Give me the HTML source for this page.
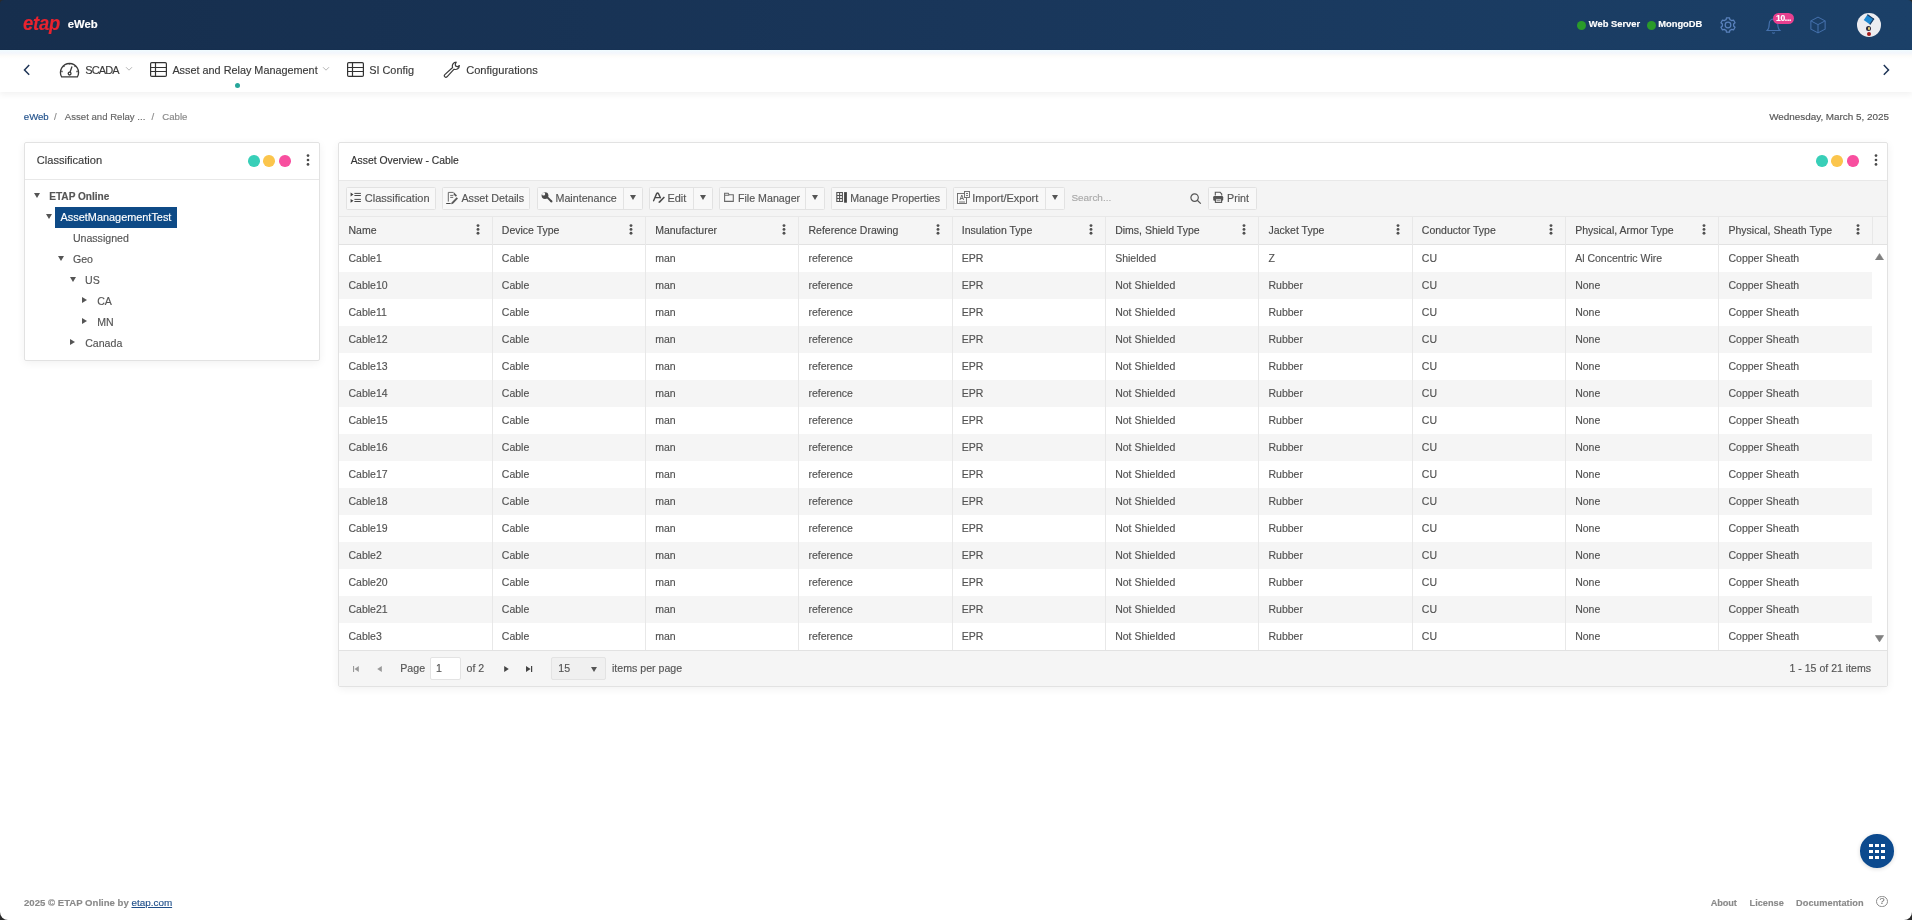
<!DOCTYPE html><html><head><meta charset="utf-8"><style>
*{box-sizing:border-box;margin:0;padding:0}
html,body{width:1912px;height:920px;overflow:hidden;background:#fff;font-family:"Liberation Sans",sans-serif;font-size:11px;color:#555}
#hdr{position:absolute;left:0;top:0;width:1912px;height:50px;background:linear-gradient(90deg,#162e4d 0%,#19365a 50%,#1b4068 100%)}
#nav{position:absolute;left:0;top:50px;width:1912px;height:42px;background:linear-gradient(#effbff 0,#f3f6fc 3px,#fdfcfa 6px,#fff 9px);box-shadow:0 3px 6px rgba(0,0,0,0.05)}
.t{position:absolute;white-space:nowrap;line-height:1;-webkit-text-stroke:0.15px currentColor}
.b{position:absolute}
.panel{position:absolute;background:#fff;border:1px solid #e2e2e2;border-radius:2px;box-shadow:0 2px 8px rgba(0,0,0,0.06)}
.dot{position:absolute;border-radius:50%}
.keb{position:absolute;width:3px;height:11px}
.keb i{position:absolute;left:0;width:2.8px;height:2.8px;border-radius:50%}
.btn{position:absolute;top:187px;height:22.5px;background:#f8f8f8;border:1px solid #e2e2e2;border-radius:1.5px}
.col{position:absolute;top:217px;height:433px;width:1px;background:#e8e8e8}
.row{position:absolute;left:339px;width:1533px;height:27px}
.tri{position:absolute;width:0;height:0}
</style></head><body><div id="root" style="position:absolute;left:0;top:0;width:1912px;height:920px;will-change:transform">
<div id="hdr"></div>
<div class="t" style="top:12.42px;font-size:21.00px;color:#e8232f;left:23.30px;font-weight:bold;font-style:italic;transform:scaleX(0.88);transform-origin:0 0;letter-spacing:-0.3px">etap</div>
<div class="t" style="top:19.03px;font-size:11.30px;color:#fff;left:67.80px;font-weight:bold;">eWeb</div>
<div class="dot" style="left:1577.10px;top:20.50px;width:9.40px;height:9.40px;background:#2a9b2a;"></div>
<div class="t" style="top:19.99px;font-size:9.35px;color:#fff;left:1588.80px;font-weight:bold;">Web Server</div>
<div class="dot" style="left:1646.50px;top:20.50px;width:9.40px;height:9.40px;background:#2a9b2a;"></div>
<div class="t" style="top:19.99px;font-size:9.35px;color:#fff;left:1658.20px;font-weight:bold;">MongoDB</div>
<svg style="position:absolute;left:1719.3px;top:15.6px;" width="18" height="18" viewBox="0 0 18 18"><g fill="none" stroke="#5a82bd" stroke-width="1.25" stroke-linejoin="round"><path d="M6.15 4.06 L7.14 3.61 L7.46 1.76 L10.54 1.76 L10.86 3.61 L11.85 4.06 L12.74 4.70 L14.50 4.05 L16.04 6.71 L14.60 7.91 L14.70 9.00 L14.60 10.09 L16.04 11.29 L14.50 13.95 L12.74 13.30 L11.85 13.94 L10.86 14.39 L10.54 16.24 L7.46 16.24 L7.14 14.39 L6.15 13.94 L5.26 13.30 L3.50 13.95 L1.96 11.29 L3.40 10.09 L3.30 9.00 L3.40 7.91 L1.96 6.71 L3.50 4.05 L5.26 4.70z"/><circle cx="9" cy="9" r="2.8"/></g></svg>
<svg style="position:absolute;left:1765px;top:17px;" width="17" height="17" viewBox="0 0 24 24"><g fill="none" stroke="#4571ad" stroke-width="1.6"><path d="M18 9A6 6 0 0 0 6 9c0 7-3 10-3 10h18s-3-3-3-10"/><path d="M13.73 22a2 2 0 0 1-3.46 0"/></g></svg>
<div class="t" style="left:1772.8px;top:13.4px;width:21.5px;height:10.5px;border-radius:5.5px;background:#e8408f;color:#fff;font-size:8.5px;font-weight:bold;line-height:10.5px;text-align:center;letter-spacing:-0.3px">10...</div>
<svg style="position:absolute;left:1809px;top:16px;" width="18" height="18" viewBox="0 0 24 24"><g fill="none" stroke="#4571ad" stroke-width="1.4" stroke-linejoin="round"><path d="M12 1.5 21.5 6.5v11L12 22.5 2.5 17.5v-11z"/><path d="M2.5 6.5 12 11.5 21.5 6.5M12 11.5v11"/></g></svg>
<div class="dot" style="left:1857.10px;top:12.90px;width:23.80px;height:23.80px;background:#ececf0;"></div>
<div class="b" style="left:1864.6px;top:16.3px;width:8px;height:7px;background:#1e88d0;border-top:1px solid #24385a;border-right:1px solid #24385a;transform:rotate(35deg)"></div>
<div class="dot" style="left:1865.70px;top:26.30px;width:5.20px;height:5.20px;background:#2e2a3e;"></div>
<div class="dot" style="left:1867.60px;top:27.00px;width:2.60px;height:2.60px;background:#e6cf74;"></div>
<div class="dot" style="left:1867.30px;top:31.80px;width:4.20px;height:4.20px;background:#a51a1a;"></div>
<div id="nav"></div>
<svg style="position:absolute;left:21.5px;top:64px;" width="10" height="12" viewBox="0 0 10 12"><path d="M7.2 1 2.5 5.9l4.7 4.8" fill="none" stroke="#1f3557" stroke-width="1.5"/></svg>
<svg style="position:absolute;left:59px;top:61px;" width="21" height="17" viewBox="0 0 21 17"><g fill="none" stroke="#3b3b3b" stroke-width="1.3"><path d="M2.6 15.8h15.8a9 9 0 1 0-15.8 0z"/><path d="M13 5.5 11 11.3"/><circle cx="10.6" cy="12.6" r="1.4"/><path d="M10.5 2.2v1.3M4.5 5l.9.9M16.5 5l-.9.9M2.3 10.5h1.3M18.7 10.5h-1.3"/></g></svg>
<div class="t" style="top:65.19px;font-size:11.00px;color:#3a3a3a;left:85.20px;letter-spacing:-0.85px">SCADA</div>
<svg style="position:absolute;left:125px;top:66px;" width="8" height="6" viewBox="0 0 8 6"><path d="M1 1.2 4 4.2 7 1.2" fill="none" stroke="#b5b5b5" stroke-width="1"/></svg>
<svg style="position:absolute;left:150px;top:62px;" width="17" height="15" viewBox="0 0 17 15"><g fill="none" stroke="#333" stroke-width="1.2"><rect x=".6" y=".6" width="15.8" height="13.8" rx="1.2"/><path d="M.6 5.5h15.8M.6 9.5h15.8M5.5.6v13.8"/></g></svg>
<div class="t" style="top:65.32px;font-size:10.85px;color:#3a3a3a;left:172.40px;">Asset and Relay Management</div>
<svg style="position:absolute;left:322px;top:66px;" width="8" height="6" viewBox="0 0 8 6"><path d="M1 1.2 4 4.2 7 1.2" fill="none" stroke="#b5b5b5" stroke-width="1"/></svg>
<div class="dot" style="left:235.05px;top:83.15px;width:5.30px;height:5.30px;background:#26a69a;"></div>
<svg style="position:absolute;left:347px;top:62px;" width="17" height="15" viewBox="0 0 17 15"><g fill="none" stroke="#333" stroke-width="1.2"><rect x=".6" y=".6" width="15.8" height="13.8" rx="1.2"/><path d="M.6 5.5h15.8M.6 9.5h15.8M5.5.6v13.8"/></g></svg>
<div class="t" style="top:65.27px;font-size:10.90px;color:#3a3a3a;left:369.20px;">SI Config</div>
<svg style="position:absolute;left:443px;top:61px;" width="18" height="17" viewBox="0 0 18 17"><path d="M13.2 1.2a3.9 3.9 0 0 0-3.6 5.3L1.8 13.6a1.5 1.5 0 0 0 0 2.1l.1.1a1.5 1.5 0 0 0 2.1 0l7.1-7.6a3.9 3.9 0 0 0 5.3-3.6l-2 1.2-1.9-.9-.2-2z" fill="none" stroke="#3b3b3b" stroke-width="1.2" stroke-linejoin="round"/></svg>
<div class="t" style="top:65.10px;font-size:11.10px;color:#3a3a3a;left:466.20px;">Configurations</div>
<svg style="position:absolute;left:1880.5px;top:64px;" width="10" height="12" viewBox="0 0 10 12"><path d="M2.8 1 7.5 5.9l-4.7 4.8" fill="none" stroke="#1f3557" stroke-width="1.5"/></svg>
<div class="t" style="top:111.87px;font-size:9.60px;color:#1f4f8a;left:23.80px;">eWeb</div>
<div class="t" style="top:111.87px;font-size:9.60px;color:#888;left:54.00px;">/</div>
<div class="t" style="top:111.87px;font-size:9.60px;color:#666;left:64.80px;">Asset and Relay ...</div>
<div class="t" style="top:111.87px;font-size:9.60px;color:#888;left:151.50px;">/</div>
<div class="t" style="top:111.87px;font-size:9.60px;color:#888;left:162.30px;">Cable</div>
<div class="t" style="top:111.62px;font-size:9.90px;color:#555;right:23.00px;">Wednesday, March 5, 2025</div>
<div class="panel" style="left:24px;top:142px;width:296px;height:219px"></div>
<div class="b" style="left:25px;top:179px;width:294px;height:1px;background:#e8e8e8;"></div>
<div class="t" style="top:154.90px;font-size:11.10px;color:#3a3a3a;left:36.80px;">Classification</div>
<div class="dot" style="left:248.10px;top:155.10px;width:11.60px;height:11.60px;background:#38cfb8;"></div>
<div class="dot" style="left:263.30px;top:155.10px;width:11.60px;height:11.60px;background:#fbc54c;"></div>
<div class="dot" style="left:279.20px;top:155.10px;width:11.60px;height:11.60px;background:#f84f9f;"></div>
<svg style="position:absolute;left:304.70px;top:152.90px" width="6" height="14" viewBox="0 0 6 14"><g fill="#4a4a4a"><circle cx="3" cy="2.6" r="1.35"/><circle cx="3" cy="7" r="1.35"/><circle cx="3" cy="11.4" r="1.35"/></g></svg>
<div class="tri" style="left:33.70px;top:193.30px;border-left:3.50px solid transparent;border-right:3.50px solid transparent;border-top:5.00px solid #555"></div>
<div class="t" style="top:191.55px;font-size:10.10px;color:#555;left:49.20px;font-weight:bold;">ETAP Online</div>
<div class="b" style="left:55px;top:207px;width:122px;height:21px;background:#0e4a86;"></div>
<div class="tri" style="left:46.00px;top:213.70px;border-left:3.50px solid transparent;border-right:3.50px solid transparent;border-top:5.00px solid #555"></div>
<div class="t" style="top:212.27px;font-size:10.90px;color:#fff;left:60.60px;">AssetManagementTest</div>
<div class="t" style="top:233.23px;font-size:10.60px;color:#555;left:72.90px;">Unassigned</div>
<div class="tri" style="left:57.80px;top:256.00px;border-left:3.50px solid transparent;border-right:3.50px solid transparent;border-top:5.00px solid #555"></div>
<div class="t" style="top:254.03px;font-size:10.60px;color:#555;left:72.90px;">Geo</div>
<div class="tri" style="left:69.80px;top:276.80px;border-left:3.50px solid transparent;border-right:3.50px solid transparent;border-top:5.00px solid #555"></div>
<div class="t" style="top:275.03px;font-size:10.60px;color:#555;left:85.00px;">US</div>
<div class="tri" style="left:82.40px;top:297.00px;border-top:3.50px solid transparent;border-bottom:3.50px solid transparent;border-left:5.00px solid #555"></div>
<div class="t" style="top:296.03px;font-size:10.60px;color:#555;left:97.20px;">CA</div>
<div class="tri" style="left:82.40px;top:318.20px;border-top:3.50px solid transparent;border-bottom:3.50px solid transparent;border-left:5.00px solid #555"></div>
<div class="t" style="top:317.03px;font-size:10.60px;color:#555;left:97.20px;">MN</div>
<div class="tri" style="left:70.40px;top:338.70px;border-top:3.50px solid transparent;border-bottom:3.50px solid transparent;border-left:5.00px solid #555"></div>
<div class="t" style="top:338.03px;font-size:10.60px;color:#555;left:85.20px;">Canada</div>
<div class="panel" style="left:338px;top:142px;width:1550px;height:545px"></div>
<div class="t" style="top:155.64px;font-size:10.35px;color:#333;left:350.70px;">Asset Overview - Cable</div>
<div class="dot" style="left:1816.20px;top:155.10px;width:11.60px;height:11.60px;background:#38cfb8;"></div>
<div class="dot" style="left:1831.20px;top:155.10px;width:11.60px;height:11.60px;background:#fbc54c;"></div>
<div class="dot" style="left:1847.20px;top:155.10px;width:11.60px;height:11.60px;background:#f84f9f;"></div>
<svg style="position:absolute;left:1873.20px;top:152.90px" width="6" height="14" viewBox="0 0 6 14"><g fill="#4a4a4a"><circle cx="3" cy="2.6" r="1.35"/><circle cx="3" cy="7" r="1.35"/><circle cx="3" cy="11.4" r="1.35"/></g></svg>
<div class="b" style="left:339px;top:180px;width:1548px;height:36px;background:#f4f4f4;border-top:1px solid #e8e8e8"></div>
<div class="btn" style="left:346px;width:90px"></div>
<div class="t" style="top:192.59px;font-size:11.00px;color:#555;left:364.80px;">Classification</div>
<div class="btn" style="left:442px;width:88px"></div>
<div class="t" style="top:192.80px;font-size:10.75px;color:#555;left:461.40px;">Asset Details</div>
<div class="btn" style="left:537px;width:106px"></div>
<div class="b" style="left:623px;top:188px;width:1px;height:21px;background:#e3e3e3;"></div>
<div class="tri" style="left:630.00px;top:195.20px;border-left:3.50px solid transparent;border-right:3.50px solid transparent;border-top:5.00px solid #555"></div>
<div class="t" style="top:192.84px;font-size:10.70px;color:#555;left:555.50px;">Maintenance</div>
<div class="btn" style="left:649px;width:64px"></div>
<div class="b" style="left:693px;top:188px;width:1px;height:21px;background:#e3e3e3;"></div>
<div class="tri" style="left:700.00px;top:195.20px;border-left:3.50px solid transparent;border-right:3.50px solid transparent;border-top:5.00px solid #555"></div>
<div class="t" style="top:192.67px;font-size:10.90px;color:#555;left:667.50px;">Edit</div>
<div class="btn" style="left:719px;width:106px"></div>
<div class="b" style="left:805px;top:188px;width:1px;height:21px;background:#e3e3e3;"></div>
<div class="tri" style="left:812.00px;top:195.20px;border-left:3.50px solid transparent;border-right:3.50px solid transparent;border-top:5.00px solid #555"></div>
<div class="t" style="top:192.88px;font-size:10.65px;color:#555;left:738.00px;">File Manager</div>
<div class="btn" style="left:831px;width:116px"></div>
<div class="t" style="top:192.88px;font-size:10.65px;color:#555;left:850.20px;">Manage Properties</div>
<div class="btn" style="left:953px;width:112px"></div>
<div class="b" style="left:1045px;top:188px;width:1px;height:21px;background:#e3e3e3;"></div>
<div class="tri" style="left:1052.00px;top:195.20px;border-left:3.50px solid transparent;border-right:3.50px solid transparent;border-top:5.00px solid #555"></div>
<div class="t" style="top:192.59px;font-size:11.00px;color:#555;left:972.30px;">Import/Export</div>
<div class="t" style="top:193.48px;font-size:9.95px;color:#aaa;left:1071.40px;">Search...</div>
<svg style="position:absolute;left:1190px;top:193px;" width="12" height="11" viewBox="0 0 12 11"><g fill="none" stroke="#555" stroke-width="1.2"><circle cx="4.6" cy="4.6" r="3.7"/><path d="M7.3 7.3 10.8 10.6"/></g></svg>
<div class="btn" style="left:1208px;width:49px"></div>
<div class="t" style="top:192.84px;font-size:10.70px;color:#555;left:1227.00px;">Print</div>
<svg style="position:absolute;left:347px;top:188px;" width="16" height="18" viewBox="0 0 16 18"><g fill="#444"><path d="M3.6 4.6v3.8l2.9-1.9z M3.6 10.9v3.9l2.9-1.95z"/></g><g stroke="#4a4a4a" stroke-width="1"><path d="M7.4 5.4h6.5M7.4 7.5h6.5M7.4 11.4h6.5M7.4 13.5h6.5"/></g></svg>
<svg style="position:absolute;left:443px;top:188px;" width="16" height="18" viewBox="0 0 16 18"><g fill="none" stroke="#6a6a6a" stroke-width="1"><path d="M5.3 13.6V4.4h5.2"/><path d="M7.2 7.4h3.2M7.2 9.4h3"/></g><path d="M10.8 4.2l3.2 3.3-1.2 1.2-2.2-2.2z" fill="#555"/><path d="M13.6 9.2l1.4 1.4-5 5.2-1.9.5.5-1.9z" fill="#5a5a5a"/><path d="M3.2 15.5h4.5" stroke="#444" stroke-width="1"/></svg>
<svg style="position:absolute;left:538px;top:188px;" width="16" height="17" viewBox="0 0 16 17"><g fill="#4a4a4a"><circle cx="7" cy="7.6" r="3.4"/><path d="M8.2 9.6 9.6 8.2 14.2 12.8 12.8 14.2z"/><circle cx="13.5" cy="13.5" r="1"/></g><circle cx="5.6" cy="5.9" r="1.6" fill="#f8f8f8"/></svg>
<svg style="position:absolute;left:650px;top:188px;" width="16" height="17" viewBox="0 0 16 17"><g fill="none" stroke="#4a4a4a" stroke-width="1.4" stroke-linecap="round"><path d="M3.6 12.8 6.5 5.9Q7.5 4 8.6 5.9L10.4 9.8M5.2 9.6H9.6"/></g><path d="M13.8 8.4l1.1 1.1-4.9 5.2-1.5.3.3-1.5z" fill="#4a4a4a"/></svg>
<svg style="position:absolute;left:720px;top:188px;" width="16" height="16" viewBox="0 0 16 16"><path d="M4.6 5.2h3.6l.9 1.6h4.2v6.6H4.6z M4.6 7.2h4.6" fill="none" stroke="#6a6a6a" stroke-width="1.1"/></svg>
<svg style="position:absolute;left:833px;top:188px;" width="16" height="16" viewBox="0 0 16 16"><g fill="none" stroke="#555" stroke-width="1.1"><path d="M3.8 4.5h5.6v9H3.8z M6.6 4.5v9 M3.8 7.5h5.6 M3.8 10.5h5.6"/></g><rect x="11.1" y="4.1" width="2.8" height="10.6" fill="#444"/></svg>
<svg style="position:absolute;left:957px;top:191px;" width="13" height="13" viewBox="0 0 13 13"><g fill="none" stroke="#666" stroke-width="0.9"><rect x=".5" y="2.5" width="9" height="10"/><path d="M3 9l1.8-5 1.8 5M3.6 7.5h2.4M2 11h6"/><rect x="7.5" y=".5" width="5" height="6" fill="#f8f8f8"/><path d="M9 2.5h2M9 4.5h2"/></g></svg>
<svg style="position:absolute;left:1208px;top:186px;" width="20" height="20" viewBox="0 0 20 20"><path d="M7.3 9.5V6.3h4.8l1.6 1.6v1.6" fill="none" stroke="#555" stroke-width="1.1"/><rect x="5.2" y="10" width="10" height="4.8" rx="1.2" fill="#555"/><rect x="7.4" y="12.8" width="6.2" height="3.6" fill="#f8f8f8" stroke="#555" stroke-width="1.1"/><path d="M8.5 14.6h4" stroke="#777" stroke-width="0.8"/></svg>
<div class="b" style="left:339px;top:216px;width:1548px;height:29px;background:#f5f5f5;border-top:1px solid #e8e8e8;border-bottom:1px solid #e2e2e2"></div>
<div class="t" style="top:225.01px;font-size:10.50px;color:#484848;left:348.50px;">Name</div>
<svg style="position:absolute;left:475.00px;top:224.20px" width="6" height="12" viewBox="0 0 6 12"><g fill="#505050"><circle cx="3" cy="1.6" r="1.45"/><circle cx="3" cy="5.4" r="1.45"/><circle cx="3" cy="9.2" r="1.45"/></g></svg>
<div class="t" style="top:225.01px;font-size:10.50px;color:#484848;left:501.83px;">Device Type</div>
<svg style="position:absolute;left:628.00px;top:224.20px" width="6" height="12" viewBox="0 0 6 12"><g fill="#505050"><circle cx="3" cy="1.6" r="1.45"/><circle cx="3" cy="5.4" r="1.45"/><circle cx="3" cy="9.2" r="1.45"/></g></svg>
<div class="t" style="top:225.01px;font-size:10.50px;color:#484848;left:655.17px;">Manufacturer</div>
<svg style="position:absolute;left:781.00px;top:224.20px" width="6" height="12" viewBox="0 0 6 12"><g fill="#505050"><circle cx="3" cy="1.6" r="1.45"/><circle cx="3" cy="5.4" r="1.45"/><circle cx="3" cy="9.2" r="1.45"/></g></svg>
<div class="t" style="top:225.01px;font-size:10.50px;color:#484848;left:808.50px;">Reference Drawing</div>
<svg style="position:absolute;left:935.00px;top:224.20px" width="6" height="12" viewBox="0 0 6 12"><g fill="#505050"><circle cx="3" cy="1.6" r="1.45"/><circle cx="3" cy="5.4" r="1.45"/><circle cx="3" cy="9.2" r="1.45"/></g></svg>
<div class="t" style="top:225.01px;font-size:10.50px;color:#484848;left:961.83px;">Insulation Type</div>
<svg style="position:absolute;left:1088.00px;top:224.20px" width="6" height="12" viewBox="0 0 6 12"><g fill="#505050"><circle cx="3" cy="1.6" r="1.45"/><circle cx="3" cy="5.4" r="1.45"/><circle cx="3" cy="9.2" r="1.45"/></g></svg>
<div class="t" style="top:225.01px;font-size:10.50px;color:#484848;left:1115.17px;">Dims, Shield Type</div>
<svg style="position:absolute;left:1241.00px;top:224.20px" width="6" height="12" viewBox="0 0 6 12"><g fill="#505050"><circle cx="3" cy="1.6" r="1.45"/><circle cx="3" cy="5.4" r="1.45"/><circle cx="3" cy="9.2" r="1.45"/></g></svg>
<div class="t" style="top:225.01px;font-size:10.50px;color:#484848;left:1268.50px;">Jacket Type</div>
<svg style="position:absolute;left:1395.00px;top:224.20px" width="6" height="12" viewBox="0 0 6 12"><g fill="#505050"><circle cx="3" cy="1.6" r="1.45"/><circle cx="3" cy="5.4" r="1.45"/><circle cx="3" cy="9.2" r="1.45"/></g></svg>
<div class="t" style="top:225.01px;font-size:10.50px;color:#484848;left:1421.83px;">Conductor Type</div>
<svg style="position:absolute;left:1548.00px;top:224.20px" width="6" height="12" viewBox="0 0 6 12"><g fill="#505050"><circle cx="3" cy="1.6" r="1.45"/><circle cx="3" cy="5.4" r="1.45"/><circle cx="3" cy="9.2" r="1.45"/></g></svg>
<div class="t" style="top:225.01px;font-size:10.50px;color:#484848;left:1575.17px;">Physical, Armor Type</div>
<svg style="position:absolute;left:1701.00px;top:224.20px" width="6" height="12" viewBox="0 0 6 12"><g fill="#505050"><circle cx="3" cy="1.6" r="1.45"/><circle cx="3" cy="5.4" r="1.45"/><circle cx="3" cy="9.2" r="1.45"/></g></svg>
<div class="t" style="top:225.01px;font-size:10.50px;color:#484848;left:1728.50px;">Physical, Sheath Type</div>
<svg style="position:absolute;left:1855.00px;top:224.20px" width="6" height="12" viewBox="0 0 6 12"><g fill="#505050"><circle cx="3" cy="1.6" r="1.45"/><circle cx="3" cy="5.4" r="1.45"/><circle cx="3" cy="9.2" r="1.45"/></g></svg>
<div class="t" style="top:253.31px;font-size:10.50px;color:#525252;left:348.50px;">Cable1</div>
<div class="t" style="top:253.31px;font-size:10.50px;color:#525252;left:501.83px;">Cable</div>
<div class="t" style="top:253.31px;font-size:10.50px;color:#525252;left:655.17px;">man</div>
<div class="t" style="top:253.31px;font-size:10.50px;color:#525252;left:808.50px;">reference</div>
<div class="t" style="top:253.31px;font-size:10.50px;color:#525252;left:961.83px;">EPR</div>
<div class="t" style="top:253.31px;font-size:10.50px;color:#525252;left:1115.17px;">Shielded</div>
<div class="t" style="top:253.31px;font-size:10.50px;color:#525252;left:1268.50px;">Z</div>
<div class="t" style="top:253.31px;font-size:10.50px;color:#525252;left:1421.83px;">CU</div>
<div class="t" style="top:253.31px;font-size:10.50px;color:#525252;left:1575.17px;">Al Concentric Wire</div>
<div class="t" style="top:253.31px;font-size:10.50px;color:#525252;left:1728.50px;">Copper Sheath</div>
<div class="row" style="top:272px;background:#f5f5f5"></div>
<div class="t" style="top:280.31px;font-size:10.50px;color:#525252;left:348.50px;">Cable10</div>
<div class="t" style="top:280.31px;font-size:10.50px;color:#525252;left:501.83px;">Cable</div>
<div class="t" style="top:280.31px;font-size:10.50px;color:#525252;left:655.17px;">man</div>
<div class="t" style="top:280.31px;font-size:10.50px;color:#525252;left:808.50px;">reference</div>
<div class="t" style="top:280.31px;font-size:10.50px;color:#525252;left:961.83px;">EPR</div>
<div class="t" style="top:280.31px;font-size:10.50px;color:#525252;left:1115.17px;">Not Shielded</div>
<div class="t" style="top:280.31px;font-size:10.50px;color:#525252;left:1268.50px;">Rubber</div>
<div class="t" style="top:280.31px;font-size:10.50px;color:#525252;left:1421.83px;">CU</div>
<div class="t" style="top:280.31px;font-size:10.50px;color:#525252;left:1575.17px;">None</div>
<div class="t" style="top:280.31px;font-size:10.50px;color:#525252;left:1728.50px;">Copper Sheath</div>
<div class="t" style="top:307.31px;font-size:10.50px;color:#525252;left:348.50px;">Cable11</div>
<div class="t" style="top:307.31px;font-size:10.50px;color:#525252;left:501.83px;">Cable</div>
<div class="t" style="top:307.31px;font-size:10.50px;color:#525252;left:655.17px;">man</div>
<div class="t" style="top:307.31px;font-size:10.50px;color:#525252;left:808.50px;">reference</div>
<div class="t" style="top:307.31px;font-size:10.50px;color:#525252;left:961.83px;">EPR</div>
<div class="t" style="top:307.31px;font-size:10.50px;color:#525252;left:1115.17px;">Not Shielded</div>
<div class="t" style="top:307.31px;font-size:10.50px;color:#525252;left:1268.50px;">Rubber</div>
<div class="t" style="top:307.31px;font-size:10.50px;color:#525252;left:1421.83px;">CU</div>
<div class="t" style="top:307.31px;font-size:10.50px;color:#525252;left:1575.17px;">None</div>
<div class="t" style="top:307.31px;font-size:10.50px;color:#525252;left:1728.50px;">Copper Sheath</div>
<div class="row" style="top:326px;background:#f5f5f5"></div>
<div class="t" style="top:334.31px;font-size:10.50px;color:#525252;left:348.50px;">Cable12</div>
<div class="t" style="top:334.31px;font-size:10.50px;color:#525252;left:501.83px;">Cable</div>
<div class="t" style="top:334.31px;font-size:10.50px;color:#525252;left:655.17px;">man</div>
<div class="t" style="top:334.31px;font-size:10.50px;color:#525252;left:808.50px;">reference</div>
<div class="t" style="top:334.31px;font-size:10.50px;color:#525252;left:961.83px;">EPR</div>
<div class="t" style="top:334.31px;font-size:10.50px;color:#525252;left:1115.17px;">Not Shielded</div>
<div class="t" style="top:334.31px;font-size:10.50px;color:#525252;left:1268.50px;">Rubber</div>
<div class="t" style="top:334.31px;font-size:10.50px;color:#525252;left:1421.83px;">CU</div>
<div class="t" style="top:334.31px;font-size:10.50px;color:#525252;left:1575.17px;">None</div>
<div class="t" style="top:334.31px;font-size:10.50px;color:#525252;left:1728.50px;">Copper Sheath</div>
<div class="t" style="top:361.31px;font-size:10.50px;color:#525252;left:348.50px;">Cable13</div>
<div class="t" style="top:361.31px;font-size:10.50px;color:#525252;left:501.83px;">Cable</div>
<div class="t" style="top:361.31px;font-size:10.50px;color:#525252;left:655.17px;">man</div>
<div class="t" style="top:361.31px;font-size:10.50px;color:#525252;left:808.50px;">reference</div>
<div class="t" style="top:361.31px;font-size:10.50px;color:#525252;left:961.83px;">EPR</div>
<div class="t" style="top:361.31px;font-size:10.50px;color:#525252;left:1115.17px;">Not Shielded</div>
<div class="t" style="top:361.31px;font-size:10.50px;color:#525252;left:1268.50px;">Rubber</div>
<div class="t" style="top:361.31px;font-size:10.50px;color:#525252;left:1421.83px;">CU</div>
<div class="t" style="top:361.31px;font-size:10.50px;color:#525252;left:1575.17px;">None</div>
<div class="t" style="top:361.31px;font-size:10.50px;color:#525252;left:1728.50px;">Copper Sheath</div>
<div class="row" style="top:380px;background:#f5f5f5"></div>
<div class="t" style="top:388.31px;font-size:10.50px;color:#525252;left:348.50px;">Cable14</div>
<div class="t" style="top:388.31px;font-size:10.50px;color:#525252;left:501.83px;">Cable</div>
<div class="t" style="top:388.31px;font-size:10.50px;color:#525252;left:655.17px;">man</div>
<div class="t" style="top:388.31px;font-size:10.50px;color:#525252;left:808.50px;">reference</div>
<div class="t" style="top:388.31px;font-size:10.50px;color:#525252;left:961.83px;">EPR</div>
<div class="t" style="top:388.31px;font-size:10.50px;color:#525252;left:1115.17px;">Not Shielded</div>
<div class="t" style="top:388.31px;font-size:10.50px;color:#525252;left:1268.50px;">Rubber</div>
<div class="t" style="top:388.31px;font-size:10.50px;color:#525252;left:1421.83px;">CU</div>
<div class="t" style="top:388.31px;font-size:10.50px;color:#525252;left:1575.17px;">None</div>
<div class="t" style="top:388.31px;font-size:10.50px;color:#525252;left:1728.50px;">Copper Sheath</div>
<div class="t" style="top:415.31px;font-size:10.50px;color:#525252;left:348.50px;">Cable15</div>
<div class="t" style="top:415.31px;font-size:10.50px;color:#525252;left:501.83px;">Cable</div>
<div class="t" style="top:415.31px;font-size:10.50px;color:#525252;left:655.17px;">man</div>
<div class="t" style="top:415.31px;font-size:10.50px;color:#525252;left:808.50px;">reference</div>
<div class="t" style="top:415.31px;font-size:10.50px;color:#525252;left:961.83px;">EPR</div>
<div class="t" style="top:415.31px;font-size:10.50px;color:#525252;left:1115.17px;">Not Shielded</div>
<div class="t" style="top:415.31px;font-size:10.50px;color:#525252;left:1268.50px;">Rubber</div>
<div class="t" style="top:415.31px;font-size:10.50px;color:#525252;left:1421.83px;">CU</div>
<div class="t" style="top:415.31px;font-size:10.50px;color:#525252;left:1575.17px;">None</div>
<div class="t" style="top:415.31px;font-size:10.50px;color:#525252;left:1728.50px;">Copper Sheath</div>
<div class="row" style="top:434px;background:#f5f5f5"></div>
<div class="t" style="top:442.31px;font-size:10.50px;color:#525252;left:348.50px;">Cable16</div>
<div class="t" style="top:442.31px;font-size:10.50px;color:#525252;left:501.83px;">Cable</div>
<div class="t" style="top:442.31px;font-size:10.50px;color:#525252;left:655.17px;">man</div>
<div class="t" style="top:442.31px;font-size:10.50px;color:#525252;left:808.50px;">reference</div>
<div class="t" style="top:442.31px;font-size:10.50px;color:#525252;left:961.83px;">EPR</div>
<div class="t" style="top:442.31px;font-size:10.50px;color:#525252;left:1115.17px;">Not Shielded</div>
<div class="t" style="top:442.31px;font-size:10.50px;color:#525252;left:1268.50px;">Rubber</div>
<div class="t" style="top:442.31px;font-size:10.50px;color:#525252;left:1421.83px;">CU</div>
<div class="t" style="top:442.31px;font-size:10.50px;color:#525252;left:1575.17px;">None</div>
<div class="t" style="top:442.31px;font-size:10.50px;color:#525252;left:1728.50px;">Copper Sheath</div>
<div class="t" style="top:469.31px;font-size:10.50px;color:#525252;left:348.50px;">Cable17</div>
<div class="t" style="top:469.31px;font-size:10.50px;color:#525252;left:501.83px;">Cable</div>
<div class="t" style="top:469.31px;font-size:10.50px;color:#525252;left:655.17px;">man</div>
<div class="t" style="top:469.31px;font-size:10.50px;color:#525252;left:808.50px;">reference</div>
<div class="t" style="top:469.31px;font-size:10.50px;color:#525252;left:961.83px;">EPR</div>
<div class="t" style="top:469.31px;font-size:10.50px;color:#525252;left:1115.17px;">Not Shielded</div>
<div class="t" style="top:469.31px;font-size:10.50px;color:#525252;left:1268.50px;">Rubber</div>
<div class="t" style="top:469.31px;font-size:10.50px;color:#525252;left:1421.83px;">CU</div>
<div class="t" style="top:469.31px;font-size:10.50px;color:#525252;left:1575.17px;">None</div>
<div class="t" style="top:469.31px;font-size:10.50px;color:#525252;left:1728.50px;">Copper Sheath</div>
<div class="row" style="top:488px;background:#f5f5f5"></div>
<div class="t" style="top:496.31px;font-size:10.50px;color:#525252;left:348.50px;">Cable18</div>
<div class="t" style="top:496.31px;font-size:10.50px;color:#525252;left:501.83px;">Cable</div>
<div class="t" style="top:496.31px;font-size:10.50px;color:#525252;left:655.17px;">man</div>
<div class="t" style="top:496.31px;font-size:10.50px;color:#525252;left:808.50px;">reference</div>
<div class="t" style="top:496.31px;font-size:10.50px;color:#525252;left:961.83px;">EPR</div>
<div class="t" style="top:496.31px;font-size:10.50px;color:#525252;left:1115.17px;">Not Shielded</div>
<div class="t" style="top:496.31px;font-size:10.50px;color:#525252;left:1268.50px;">Rubber</div>
<div class="t" style="top:496.31px;font-size:10.50px;color:#525252;left:1421.83px;">CU</div>
<div class="t" style="top:496.31px;font-size:10.50px;color:#525252;left:1575.17px;">None</div>
<div class="t" style="top:496.31px;font-size:10.50px;color:#525252;left:1728.50px;">Copper Sheath</div>
<div class="t" style="top:523.31px;font-size:10.50px;color:#525252;left:348.50px;">Cable19</div>
<div class="t" style="top:523.31px;font-size:10.50px;color:#525252;left:501.83px;">Cable</div>
<div class="t" style="top:523.31px;font-size:10.50px;color:#525252;left:655.17px;">man</div>
<div class="t" style="top:523.31px;font-size:10.50px;color:#525252;left:808.50px;">reference</div>
<div class="t" style="top:523.31px;font-size:10.50px;color:#525252;left:961.83px;">EPR</div>
<div class="t" style="top:523.31px;font-size:10.50px;color:#525252;left:1115.17px;">Not Shielded</div>
<div class="t" style="top:523.31px;font-size:10.50px;color:#525252;left:1268.50px;">Rubber</div>
<div class="t" style="top:523.31px;font-size:10.50px;color:#525252;left:1421.83px;">CU</div>
<div class="t" style="top:523.31px;font-size:10.50px;color:#525252;left:1575.17px;">None</div>
<div class="t" style="top:523.31px;font-size:10.50px;color:#525252;left:1728.50px;">Copper Sheath</div>
<div class="row" style="top:542px;background:#f5f5f5"></div>
<div class="t" style="top:550.31px;font-size:10.50px;color:#525252;left:348.50px;">Cable2</div>
<div class="t" style="top:550.31px;font-size:10.50px;color:#525252;left:501.83px;">Cable</div>
<div class="t" style="top:550.31px;font-size:10.50px;color:#525252;left:655.17px;">man</div>
<div class="t" style="top:550.31px;font-size:10.50px;color:#525252;left:808.50px;">reference</div>
<div class="t" style="top:550.31px;font-size:10.50px;color:#525252;left:961.83px;">EPR</div>
<div class="t" style="top:550.31px;font-size:10.50px;color:#525252;left:1115.17px;">Not Shielded</div>
<div class="t" style="top:550.31px;font-size:10.50px;color:#525252;left:1268.50px;">Rubber</div>
<div class="t" style="top:550.31px;font-size:10.50px;color:#525252;left:1421.83px;">CU</div>
<div class="t" style="top:550.31px;font-size:10.50px;color:#525252;left:1575.17px;">None</div>
<div class="t" style="top:550.31px;font-size:10.50px;color:#525252;left:1728.50px;">Copper Sheath</div>
<div class="t" style="top:577.31px;font-size:10.50px;color:#525252;left:348.50px;">Cable20</div>
<div class="t" style="top:577.31px;font-size:10.50px;color:#525252;left:501.83px;">Cable</div>
<div class="t" style="top:577.31px;font-size:10.50px;color:#525252;left:655.17px;">man</div>
<div class="t" style="top:577.31px;font-size:10.50px;color:#525252;left:808.50px;">reference</div>
<div class="t" style="top:577.31px;font-size:10.50px;color:#525252;left:961.83px;">EPR</div>
<div class="t" style="top:577.31px;font-size:10.50px;color:#525252;left:1115.17px;">Not Shielded</div>
<div class="t" style="top:577.31px;font-size:10.50px;color:#525252;left:1268.50px;">Rubber</div>
<div class="t" style="top:577.31px;font-size:10.50px;color:#525252;left:1421.83px;">CU</div>
<div class="t" style="top:577.31px;font-size:10.50px;color:#525252;left:1575.17px;">None</div>
<div class="t" style="top:577.31px;font-size:10.50px;color:#525252;left:1728.50px;">Copper Sheath</div>
<div class="row" style="top:596px;background:#f5f5f5"></div>
<div class="t" style="top:604.31px;font-size:10.50px;color:#525252;left:348.50px;">Cable21</div>
<div class="t" style="top:604.31px;font-size:10.50px;color:#525252;left:501.83px;">Cable</div>
<div class="t" style="top:604.31px;font-size:10.50px;color:#525252;left:655.17px;">man</div>
<div class="t" style="top:604.31px;font-size:10.50px;color:#525252;left:808.50px;">reference</div>
<div class="t" style="top:604.31px;font-size:10.50px;color:#525252;left:961.83px;">EPR</div>
<div class="t" style="top:604.31px;font-size:10.50px;color:#525252;left:1115.17px;">Not Shielded</div>
<div class="t" style="top:604.31px;font-size:10.50px;color:#525252;left:1268.50px;">Rubber</div>
<div class="t" style="top:604.31px;font-size:10.50px;color:#525252;left:1421.83px;">CU</div>
<div class="t" style="top:604.31px;font-size:10.50px;color:#525252;left:1575.17px;">None</div>
<div class="t" style="top:604.31px;font-size:10.50px;color:#525252;left:1728.50px;">Copper Sheath</div>
<div class="t" style="top:631.31px;font-size:10.50px;color:#525252;left:348.50px;">Cable3</div>
<div class="t" style="top:631.31px;font-size:10.50px;color:#525252;left:501.83px;">Cable</div>
<div class="t" style="top:631.31px;font-size:10.50px;color:#525252;left:655.17px;">man</div>
<div class="t" style="top:631.31px;font-size:10.50px;color:#525252;left:808.50px;">reference</div>
<div class="t" style="top:631.31px;font-size:10.50px;color:#525252;left:961.83px;">EPR</div>
<div class="t" style="top:631.31px;font-size:10.50px;color:#525252;left:1115.17px;">Not Shielded</div>
<div class="t" style="top:631.31px;font-size:10.50px;color:#525252;left:1268.50px;">Rubber</div>
<div class="t" style="top:631.31px;font-size:10.50px;color:#525252;left:1421.83px;">CU</div>
<div class="t" style="top:631.31px;font-size:10.50px;color:#525252;left:1575.17px;">None</div>
<div class="t" style="top:631.31px;font-size:10.50px;color:#525252;left:1728.50px;">Copper Sheath</div>
<div class="col" style="left:492px"></div>
<div class="col" style="left:645px"></div>
<div class="col" style="left:798px"></div>
<div class="col" style="left:952px"></div>
<div class="col" style="left:1105px"></div>
<div class="col" style="left:1258px"></div>
<div class="col" style="left:1412px"></div>
<div class="col" style="left:1565px"></div>
<div class="col" style="left:1718px"></div>
<div class="b" style="left:1872px;top:217px;width:1px;height:27px;background:#e8e8e8;"></div>
<svg style="position:absolute;left:1875px;top:252.5px;" width="9" height="7.5" viewBox="0 0 9 7.5"><path d="M4.5 0.6 8.6 7H0.4z" fill="#808080" stroke="#808080" stroke-width="0.6" stroke-linejoin="round"/></svg>
<svg style="position:absolute;left:1875px;top:634.8px;" width="9" height="7.5" viewBox="0 0 9 7.5"><path d="M4.5 6.9 8.6 0.5H0.4z" fill="#808080" stroke="#808080" stroke-width="0.6" stroke-linejoin="round"/></svg>
<div class="b" style="left:339px;top:650px;width:1548px;height:36px;background:#f5f5f5;border-top:1px solid #e2e2e2"></div>
<svg style="position:absolute;left:352.5px;top:666px;" width="6" height="6" viewBox="0 0 6 6"><g fill="#999"><rect x="0" y="0" width="1.1" height="6"/><path d="M5.8 0v6L1.5 3z"/></g></svg>
<svg style="position:absolute;left:376.5px;top:666px;" width="5" height="6" viewBox="0 0 5 6"><path d="M4.8 0v6L0.2 3z" fill="#999"/></svg>
<div class="t" style="top:663.23px;font-size:10.60px;color:#555;left:400.30px;">Page</div>
<div class="b" style="left:430px;top:657px;width:31px;height:23px;background:#fff;border:1px solid #e3e3e3;border-radius:2px"></div>
<div class="t" style="top:663.23px;font-size:10.60px;color:#555;left:436.00px;">1</div>
<div class="t" style="top:663.23px;font-size:10.60px;color:#555;left:466.50px;">of 2</div>
<svg style="position:absolute;left:504.4px;top:666px;" width="5" height="6" viewBox="0 0 5 6"><path d="M0.2 0v6L4.8 3z" fill="#444"/></svg>
<svg style="position:absolute;left:526px;top:666px;" width="6.5" height="6" viewBox="0 0 6.5 6"><g fill="#444"><rect x="5" y="0" width="1.2" height="6"/><path d="M0 0v6L4.6 3z"/></g></svg>
<div class="b" style="left:551px;top:657px;width:55px;height:23px;background:#f0f0f0;border:1px solid #e3e3e3;border-radius:2px"></div>
<div class="t" style="top:663.23px;font-size:10.60px;color:#555;left:558.30px;">15</div>
<div class="tri" style="left:590.80px;top:666.50px;border-left:3.50px solid transparent;border-right:3.50px solid transparent;border-top:5.00px solid #555"></div>
<div class="t" style="top:663.23px;font-size:10.60px;color:#555;left:612.00px;">items per page</div>
<div class="t" style="top:663.27px;font-size:10.55px;color:#555;right:41.00px;">1 - 15 of 21 items</div>
<div class="dot" style="left:1860.20px;top:834.40px;width:33.60px;height:33.60px;background:#0c4a8e;box-shadow:0 1px 4px rgba(0,0,0,0.15)"></div>
<div class="b" style="left:1869px;top:844.2px;width:4px;height:3px;background:#fff;"></div>
<div class="b" style="left:1875px;top:844.2px;width:4px;height:3px;background:#fff;"></div>
<div class="b" style="left:1881.3px;top:844.2px;width:4px;height:3px;background:#fff;"></div>
<div class="b" style="left:1869px;top:850.2px;width:4px;height:3px;background:#fff;"></div>
<div class="b" style="left:1875px;top:850.2px;width:4px;height:3px;background:#fff;"></div>
<div class="b" style="left:1881.3px;top:850.2px;width:4px;height:3px;background:#fff;"></div>
<div class="b" style="left:1869px;top:856.2px;width:4px;height:3px;background:#fff;"></div>
<div class="b" style="left:1875px;top:856.2px;width:4px;height:3px;background:#fff;"></div>
<div class="b" style="left:1881.3px;top:856.2px;width:4px;height:3px;background:#fff;"></div>
<div class="t" style="top:898.17px;font-size:9.60px;color:#8a8a8a;left:24.00px;font-weight:bold;">2025 © ETAP Online by <span style="color:#1f4f8a;text-decoration:underline;font-weight:normal;font-size:9.9px">etap.com</span></div>
<div class="t" style="top:898.51px;font-size:9.20px;color:#8a8a8a;left:1710.80px;font-weight:bold;letter-spacing:-0.15px">About</div>
<div class="t" style="top:898.51px;font-size:9.20px;color:#8a8a8a;left:1749.60px;font-weight:bold;">License</div>
<div class="t" style="top:898.51px;font-size:9.20px;color:#8a8a8a;left:1796.10px;font-weight:bold;letter-spacing:0.05px">Documentation</div>
<div class="dot" style="left:1876px;top:895.8px;width:11.6px;height:11.6px;border:1px solid #8a8a8a"></div>
<div class="t" style="top:897.01px;font-size:9.20px;color:#777;left:1879.40px;">?</div>
<div class="b" style="left:0;top:0;width:1912px;height:920px;border-radius:4px 4px 8px 8px;box-shadow:0 0 0 40px #2a2a2a;pointer-events:none"></div>
</div></body></html>
